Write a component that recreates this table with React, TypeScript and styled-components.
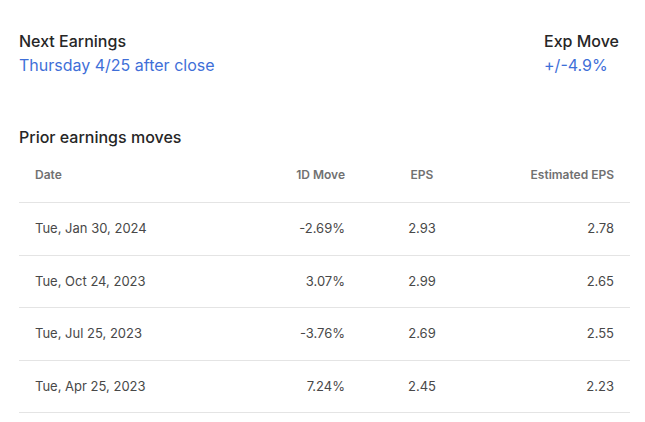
import React from "react";
import styled, { createGlobalStyle } from "styled-components";

const Global = createGlobalStyle`
  html, body { margin: 0; padding: 0; background: #ffffff; }
  body { font-family: Inter, "Noto Sans", Arial, sans-serif; -webkit-font-smoothing: antialiased; }
`;

const Page = styled.div`
  padding: 29px 15px 0 19px;
  width: 645px;
  box-sizing: border-box;
`;

const Summary = styled.div`
  display: flex;
  justify-content: space-between;
  padding-right: 11px;
`;

const Stat = styled.div`
  display: flex;
  flex-direction: column;
`;

const Label = styled.div`
  font-size: 16px;
  line-height: 24px;
  font-weight: 500;
  color: #262626;
`;

const Value = styled.div`
  font-size: 16px;
  line-height: 24px;
  font-weight: 400;
  color: #3f6fd8;
`;

const SectionTitle = styled.h2`
  margin: 48px 0 0;
  font-size: 16px;
  line-height: 24px;
  font-weight: 500;
  color: #262626;
`;

const Grid = styled.div`
  display: grid;
  grid-template-columns: 222px 120px 122px 1fr;
`;

type Align = "left" | "right" | "center";

const HeadCell = styled.div<{ $align: Align }>`
  padding: 16px 16px 17px;
  font-size: 12px;
  line-height: 20px;
  font-weight: 600;
  color: #717171;
  text-align: ${(p) => p.$align};
  border-bottom: 1px solid #e4e4e4;
`;

const Cell = styled.div<{ $align: Align }>`
  padding: 16px;
  font-size: 13px;
  line-height: 19.5px;
  font-weight: 400;
  color: #484848;
  text-align: ${(p) => p.$align};
  border-bottom: 1px solid #e4e4e4;
`;

const rows = [
  ["Tue, Jan 30, 2024", "-2.69%", "2.93", "2.78"],
  ["Tue, Oct 24, 2023", "3.07%", "2.99", "2.65"],
  ["Tue, Jul 25, 2023", "-3.76%", "2.69", "2.55"],
  ["Tue, Apr 25, 2023", "7.24%", "2.45", "2.23"],
];

const aligns: Align[] = ["left", "right", "center", "right"];
const heads = ["Date", "1D Move", "EPS", "Estimated EPS"];

export default function App() {
  return (
    <Page>
      <Global />
      <Summary>
        <Stat>
          <Label>Next Earnings</Label>
          <Value>Thursday 4/25 after close</Value>
        </Stat>
        <Stat>
          <Label>Exp Move</Label>
          <Value>+/-4.9%</Value>
        </Stat>
      </Summary>
      <SectionTitle>Prior earnings moves</SectionTitle>
      <Grid>
        {heads.map((h, i) => (
          <HeadCell key={h} $align={aligns[i]}>
            {h}
          </HeadCell>
        ))}
        {rows.map((r) =>
          r.map((c, i) => (
            <Cell key={r[0] + i} $align={aligns[i]}>
              {c}
            </Cell>
          ))
        )}
      </Grid>
    </Page>
  );
}
